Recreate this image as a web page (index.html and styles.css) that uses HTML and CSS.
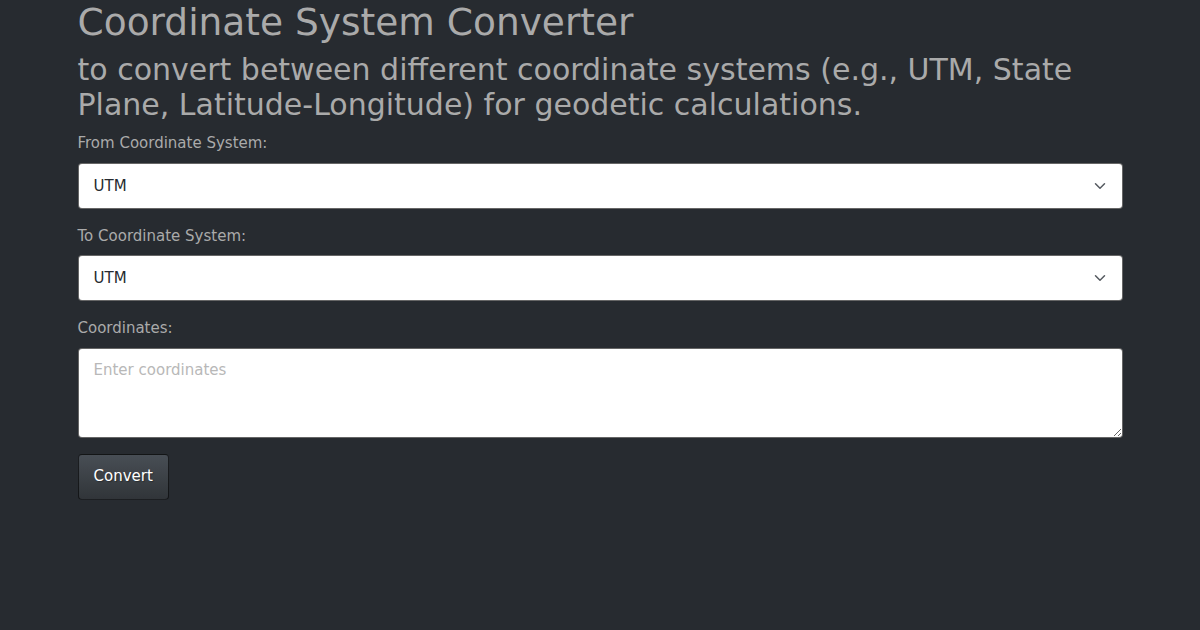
FILE: index.html
```html
<!DOCTYPE html>
<html lang="en">
<head>
<meta charset="utf-8">
<title>Coordinate System Converter</title>
<link rel="stylesheet" href="styles.css">
</head>
<body>
<div class="container">
  <h1 class="title">Coordinate System Converter</h1>
  <h2 class="subtitle">to convert between different coordinate systems (e.g., UTM, State Plane, Latitude-Longitude) for geodetic calculations.</h2>
  <form class="form">
    <div class="group">
      <label class="label" for="from">From Coordinate System:</label>
      <select class="select" id="from">
        <option>UTM</option>
        <option>State Plane</option>
        <option>Latitude-Longitude</option>
      </select>
    </div>
    <div class="group">
      <label class="label" for="to">To Coordinate System:</label>
      <select class="select" id="to">
        <option>UTM</option>
        <option>State Plane</option>
        <option>Latitude-Longitude</option>
      </select>
    </div>
    <div class="group">
      <label class="label" for="coords">Coordinates:</label>
      <textarea class="textarea" id="coords" rows="3" placeholder="Enter coordinates"></textarea>
    </div>
    <button type="button" class="btn">Convert</button>
  </form>
</div>
</body>
</html>
```

FILE: styles.css
```css
* { box-sizing: border-box; }
html, body {
  margin: 0;
  padding: 0;
}
body {
  background: #272b30;
  color: #aaaaaa;
  font-family: "DejaVu Sans", sans-serif;
  font-size: 15px;
  line-height: 1.5;
}
.container {
  max-width: 1045px;
  margin: 0 auto;
}
.title {
  margin: 0 0 8px;
  font-size: 37.5px;
  font-weight: 400;
  line-height: 1.2;
  color: #aaaaaa;
}
.subtitle {
  margin: 0 0 10px;
  font-size: 30px;
  font-weight: 400;
  line-height: 1.15;
  color: #aaaaaa;
}
.form {
  display: flex;
  flex-direction: column;
  align-items: flex-start;
}
.group {
  width: 100%;
  margin-bottom: 16px;
  display: flex;
  flex-direction: column;
}
.label {
  display: block;
  margin-bottom: 8px;
  color: #aaaaaa;
}
.select, .textarea {
  width: 100%;
  font-family: "DejaVu Sans", sans-serif;
  font-size: 15px;
  color: #272b30;
  background-color: #ffffff;
  border: 1px solid rgba(0,0,0,0.6);
  border-radius: 4px;
  margin: 0;
}
.select {
  appearance: none;
  -webkit-appearance: none;
  height: 46px;
  padding: 10px 40px 10px 15px;
  line-height: 24px;
  background-image: url("data:image/svg+xml,%3csvg xmlns='http://www.w3.org/2000/svg' viewBox='0 0 16 16'%3e%3cpath fill='none' stroke='%23555a60' stroke-linecap='round' stroke-linejoin='round' stroke-width='2' d='m2 5 6 6 6-6'/%3e%3c/svg%3e");
  background-repeat: no-repeat;
  background-position: right 16px center;
  background-size: 12px 12px;
}
.textarea {
  display: block;
  padding: 10px 15px;
  line-height: 22.5px;
  height: 90px;
  resize: vertical;
}
.textarea::placeholder {
  color: #b8b8b8;
}
.btn {
  font-family: "DejaVu Sans", sans-serif;
  font-size: 15px;
  line-height: 22.5px;
  padding: 10px 15px;
  height: 46px;
  color: #ffffff;
  text-shadow: 1px 1px 1px rgba(0,0,0,0.3);
  background-color: #3a3f44;
  background-image: linear-gradient(#484e55, #3a3f44 60%, #313539);
  border: 1px solid rgba(0,0,0,0.6);
  border-radius: 4px;
  cursor: pointer;
}
```
